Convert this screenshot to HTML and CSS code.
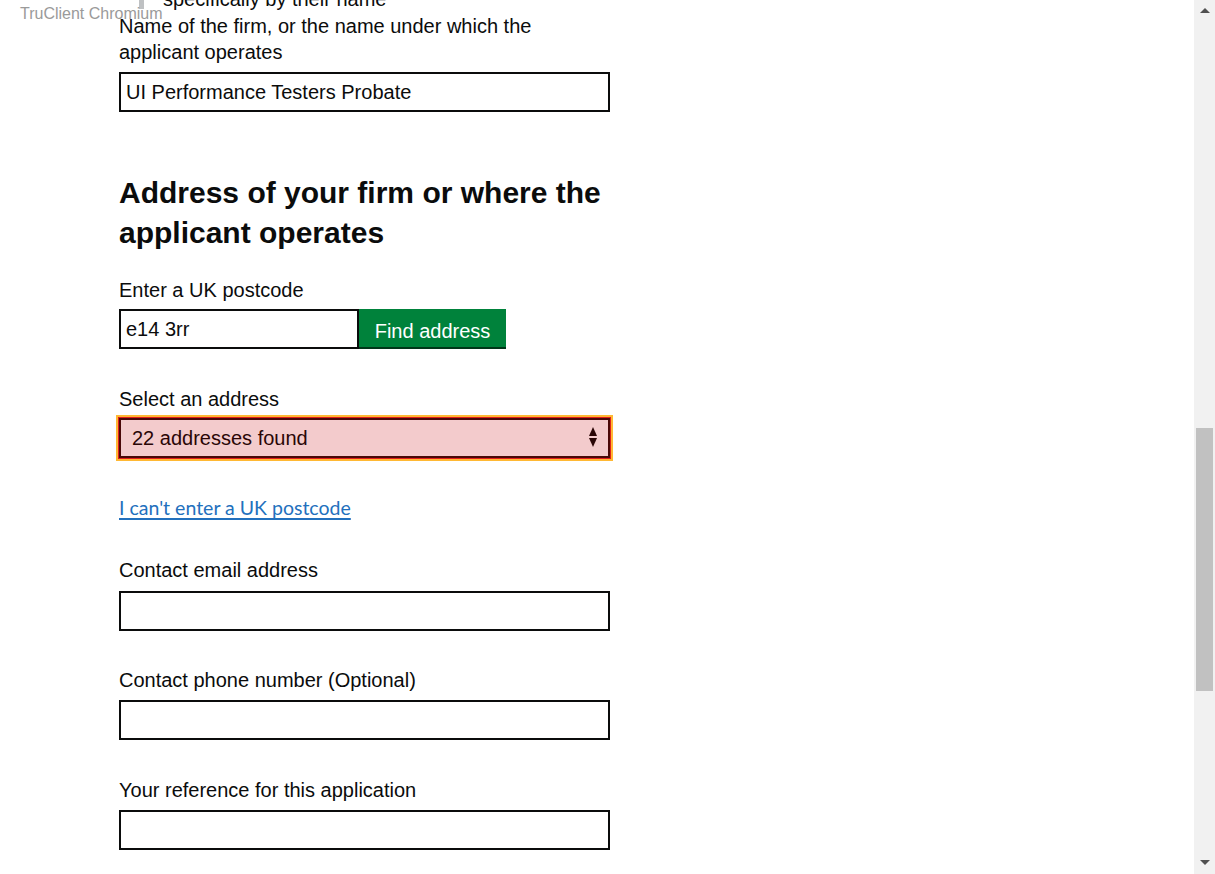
FILE: index.html
```html
<!DOCTYPE html>
<html lang="en">
<head>
<meta charset="utf-8">
<title>Address of your firm</title>
<link rel="stylesheet" href="styles.css">
</head>
<body>
<div class="truclient">TruClient Chromium</div>
<main class="page">
  <div class="inset">specifically by their name</div>

  <div class="group group-firm">
    <label class="label" for="firm">Name of the firm, or the name under which the applicant operates</label>
    <input class="input" id="firm" type="text" value="UI Performance Testers Probate">
  </div>

  <h2 class="heading">Address of your firm or where the applicant operates</h2>

  <div class="group group-postcode">
    <label class="label" for="postcode">Enter a UK postcode</label>
    <div class="postcode-row">
      <input class="input input-postcode" id="postcode" type="text" value="e14 3rr">
      <button class="button" type="button">Find address</button>
    </div>
  </div>

  <div class="group group-select">
    <label class="label" for="address">Select an address</label>
    <div class="select-wrap">
      <select class="select" id="address">
        <option>22 addresses found</option>
      </select>
      <svg class="select-arrow" width="10" height="20" viewBox="0 0 10 20" aria-hidden="true">
        <path d="M5 0 L9 9 L1 9 Z" fill="#2a0606"/>
        <path d="M1 11 L9 11 L5 20 Z" fill="#2a0606"/>
      </svg>
    </div>
  </div>

  <a class="link" href="#">I can't enter a UK postcode</a>

  <div class="group group-email">
    <label class="label" for="email">Contact email address</label>
    <input class="input" id="email" type="text">
  </div>

  <div class="group group-phone">
    <label class="label" for="phone">Contact phone number (Optional)</label>
    <input class="input" id="phone" type="text">
  </div>

  <div class="group group-ref">
    <label class="label" for="ref">Your reference for this application</label>
    <input class="input" id="ref" type="text">
  </div>
</main>

<div class="scrollbar" aria-hidden="true">
  <div class="scroll-arrow scroll-up"></div>
  <div class="scroll-track">
    <div class="scroll-thumb"></div>
  </div>
  <div class="scroll-arrow scroll-down"></div>
</div>
</body>
</html>
```

FILE: styles.css
```css
html, body {
  margin: 0;
  padding: 0;
  background: #ffffff;
  overflow: hidden;
  height: 874px;
}

body {
  font-family: "Liberation Sans", Arial, sans-serif;
  color: #0b0c0c;
  font-size: 20px;
  line-height: 26px;
  position: relative;
}

.truclient {
  position: absolute;
  left: 20px;
  top: 5px;
  font-family: "Liberation Sans", Arial, sans-serif;
  font-size: 16px;
  line-height: 18px;
  color: #9a9a9a;
  z-index: 10;
}

.page {
  display: flex;
  flex-direction: column;
  align-items: flex-start;
  padding-left: 119px;
  width: 491px;
}

.inset {
  margin-top: -11px;
  margin-left: 20px;
  padding-left: 19px;
  border-left: 5px solid #bfc1c3;
  line-height: 20px;
  height: 20px;
}

.group {
  display: flex;
  flex-direction: column;
  align-items: flex-start;
  width: 491px;
}

.label {
  display: block;
  line-height: 26px;
  margin-bottom: 7px;
}

.group-firm { margin-top: 4px; }
.group-postcode { margin-top: 24px; }
.group-select { margin-top: 37px; }
.group-email { margin-top: 36px; }
.group-phone { margin-top: 36px; }
.group-ref { margin-top: 37px; }

.group-postcode .label,
.group-select .label { margin-bottom: 6px; }
.group-email .label { margin-bottom: 8px; }

.input {
  box-sizing: border-box;
  width: 491px;
  height: 40px;
  margin: 0;
  border: 2px solid #0b0c0c;
  border-radius: 0;
  padding: 0 5px;
  font-family: "Liberation Sans", Arial, sans-serif;
  font-size: 20px;
  color: #0b0c0c;
  background: #ffffff;
  outline: none;
}

.heading {
  margin: 61px 0 0 0;
  font-size: 30px;
  line-height: 40px;
  font-weight: bold;
  color: #0b0c0c;
  width: 491px;
}

.postcode-row {
  display: flex;
  align-items: flex-start;
}

.input-postcode {
  width: 240px;
}

.button {
  box-sizing: border-box;
  width: 147px;
  height: 40px;
  margin: 0;
  border: 0;
  border-radius: 0;
  padding: 4px 0 0 0;
  background: #00823b;
  box-shadow: inset 0 -2px 0 #003618;
  color: #ffffff;
  font-family: "Liberation Sans", Arial, sans-serif;
  font-size: 20px;
  line-height: 34px;
  text-align: center;
}

.select-wrap {
  position: relative;
  width: 491px;
}

.select {
  box-sizing: border-box;
  display: block;
  width: 491px;
  height: 40px;
  margin: 0;
  -webkit-appearance: none;
  appearance: none;
  border: 2px solid #4a0808;
  border-radius: 0;
  padding: 0 0 0 11px;
  background: #f3cbcc;
  color: #2a0606;
  font-family: "Liberation Sans", Arial, sans-serif;
  font-size: 20px;
  box-shadow: 0 0 0 1px #e0201a, 0 0 0 3px #ffb833;
  outline: none;
}

.select-arrow {
  position: absolute;
  left: 469px;
  top: 9px;
  pointer-events: none;
}

.link {
  margin-top: 37px;
  font-family: Lato, "Liberation Sans", sans-serif;
  font-size: 19.5px;
  line-height: 26px;
  color: #2270bd;
  text-decoration: underline;
  text-decoration-thickness: 2px;
  text-underline-offset: 3px;
}

.scrollbar {
  position: fixed;
  top: 0;
  right: 0;
  width: 21px;
  height: 874px;
  background: #f1f1f1;
  display: flex;
  flex-direction: column;
  align-items: center;
}

.scroll-arrow {
  width: 0;
  height: 0;
  border-left: 5px solid transparent;
  border-right: 5px solid transparent;
}

.scroll-up {
  margin-top: 8px;
  border-bottom: 5px solid #505050;
}

.scroll-down {
  margin-bottom: 9px;
  border-top: 5px solid #505050;
}

.scroll-track {
  flex: 1;
  width: 100%;
  position: relative;
}

.scroll-thumb {
  position: absolute;
  left: 2px;
  right: 2px;
  top: 415px;
  height: 263px;
  background: #c1c1c1;
}
```
